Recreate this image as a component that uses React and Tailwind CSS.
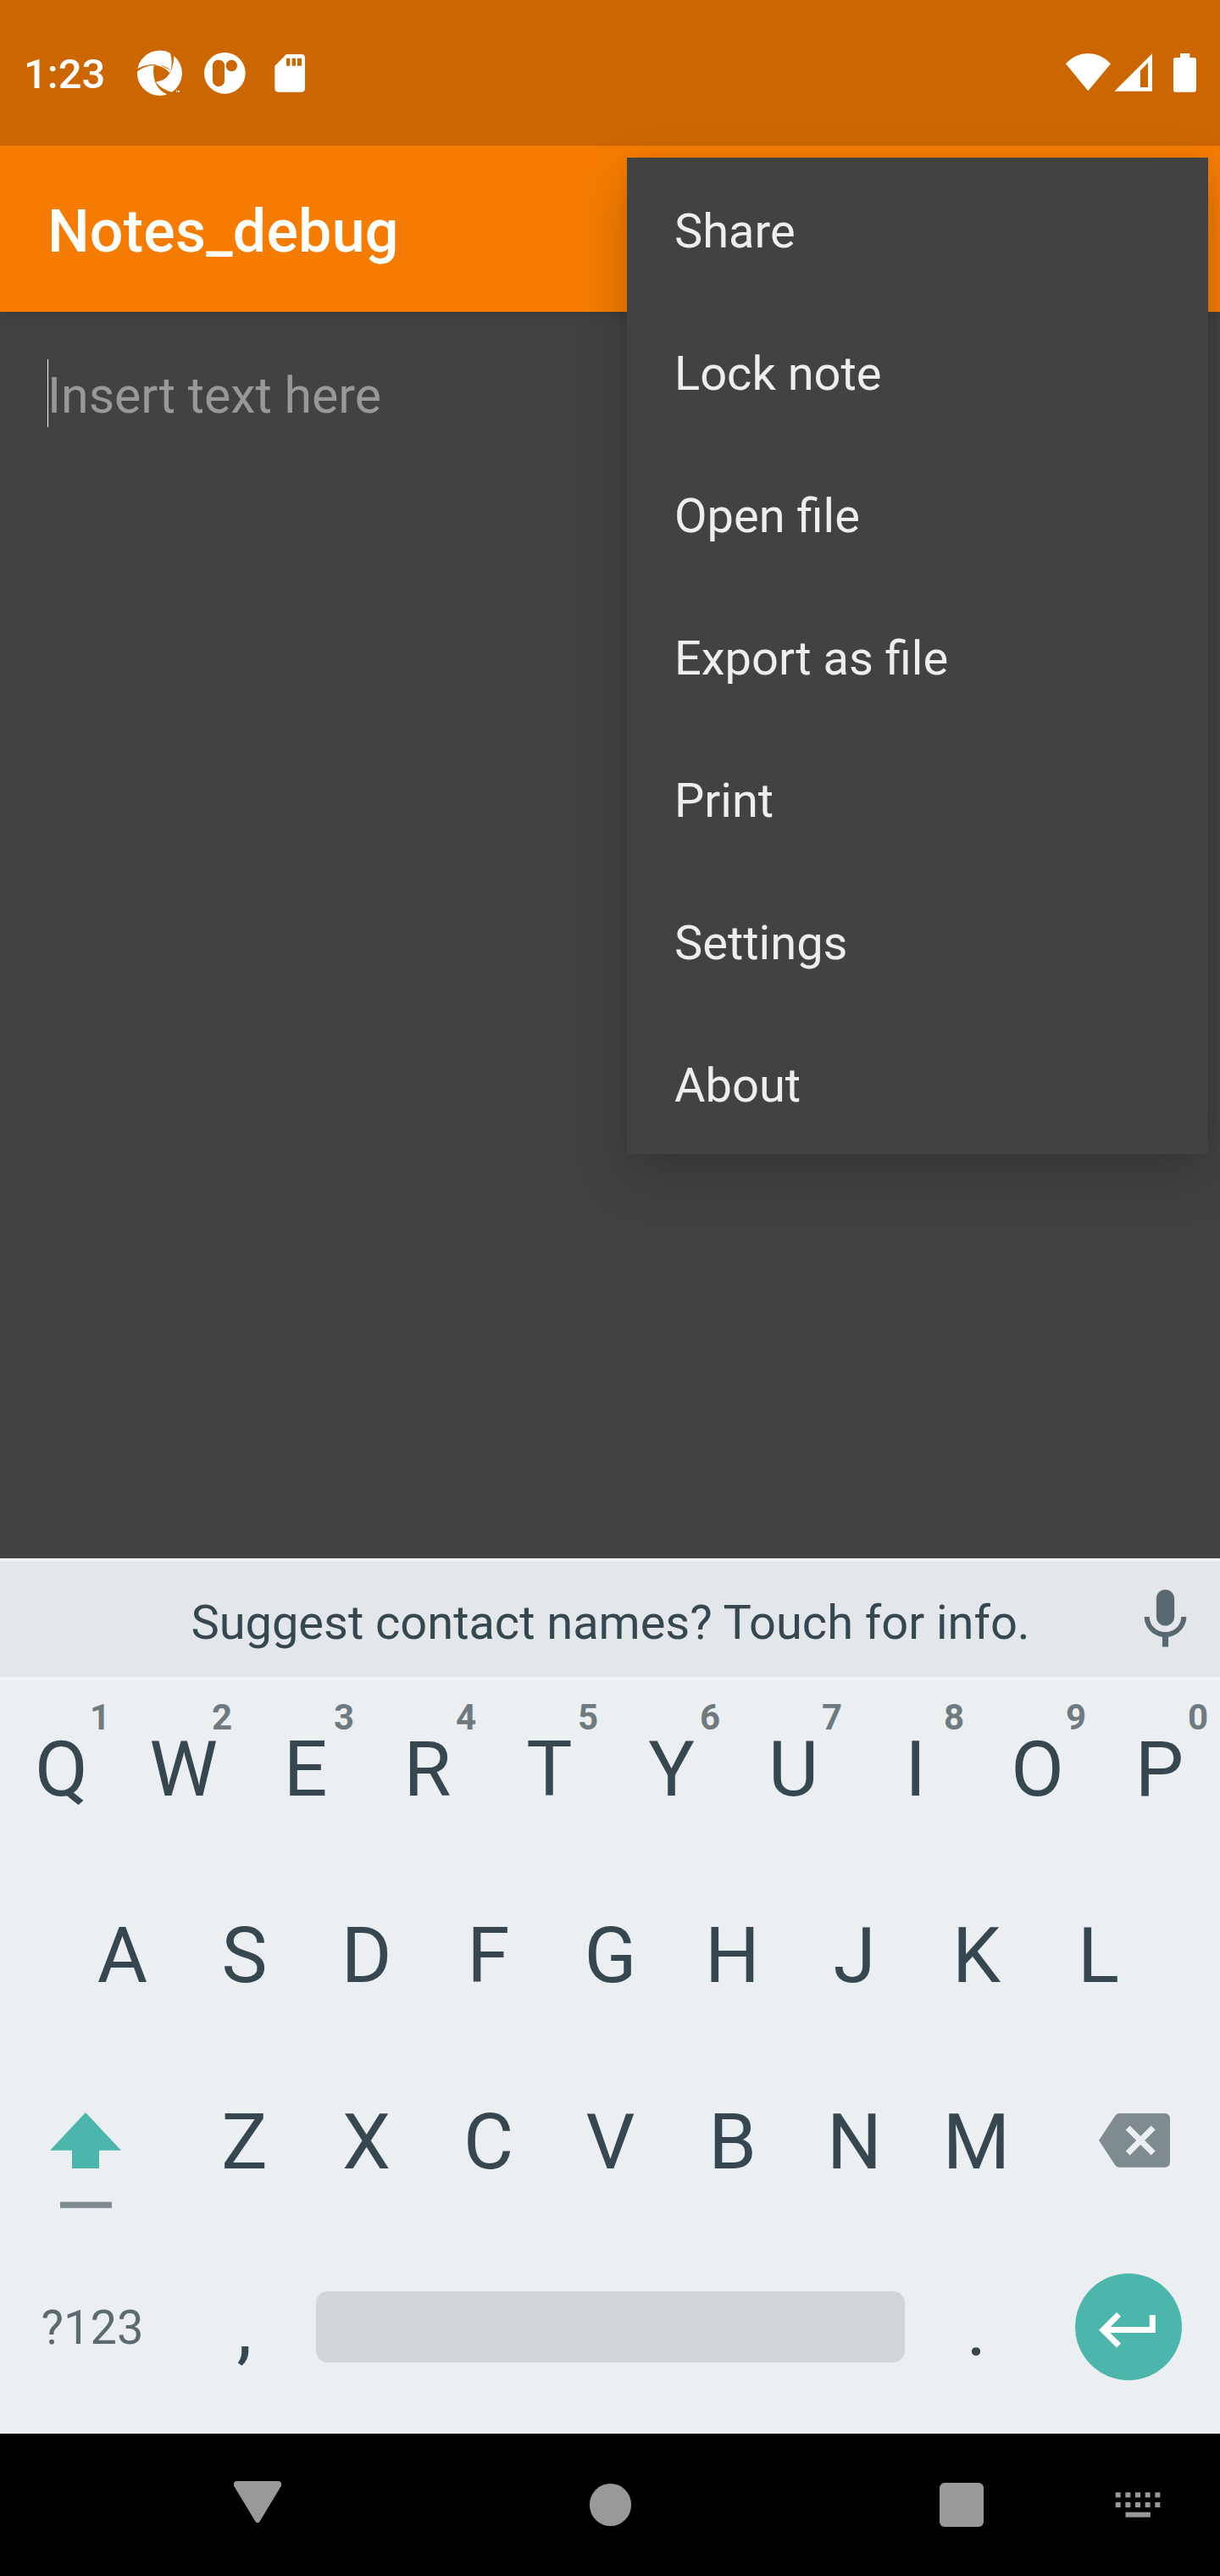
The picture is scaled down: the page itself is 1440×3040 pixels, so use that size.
import React from "react";

const MENU = ["Share", "Lock note", "Open file", "Export as file", "Print", "Settings", "About"];
const ROW_1 = ["Q", "W", "E", "R", "T", "Y", "U", "I", "O", "P"];
const HINTS = ["1", "2", "3", "4", "5", "6", "7", "8", "9", "0"];
const ROW_2 = ["A", "S", "D", "F", "G", "H", "J", "K", "L"];
const ROW_3 = ["Z", "X", "C", "V", "B", "N", "M"];

function StatusBar() {
  return (
    <header className="flex h-[172px] items-start bg-[#cc6600] text-white">
      <span className="mt-[58px] ml-[28px] w-[133px] text-[49px] leading-[60px] font-medium">1:23</span>
      <svg className="mt-[59px] h-[56px] w-[56px]" viewBox="483 177 168 168" fill="currentColor">
        <path d="M487 243A80 80 0 0 1 603 188Q612 216 605 250Q588 234 562 229Q522 225 487 243Z" />
        <path d="M615 197A80 80 0 0 1 609 326Q574 318 551 290Q585 286 600 261Q617 232 615 197Z" />
        <path d="M486 253Q510 234 545 231Q540 261 549 290Q562 321 592 334A80 80 0 0 1 486 253Z" />
        <path d="M545 231Q577 231 600 257L605 250L562 227Z" />
        <path d="M623 320H629V322H627V327H625V322H623ZM630 320H632L633 323L634 320H636V327H634V324L633 326L632 324V327H630Z" />
      </svg>
      <svg className="mt-[61px] ml-[23px] h-[51px] w-[51px]" viewBox="720 183 153 153">
        <circle cx="796" cy="259" r="73" fill="#fff" />
        <rect x="753" y="212" width="42" height="94" rx="20" fill="#cc6600" />
        <circle cx="820" cy="232.500" r="20" fill="#cc6600" />
      </svg>
      <svg className="mt-[63px] ml-[33px] h-[47px] w-[37px]" viewBox="972 189 111 141" fill="currentColor" fillRule="evenodd">
        <path d="M1014 192H1067Q1080 192 1080 205V313Q1080 326 1067 326H986Q973 326 973 313V233ZM1014 206V233H1027V206ZM1034 206V233H1047V206ZM1053 206V233H1068V206Z" />
      </svg>
      <svg className="mt-[61px] ml-auto h-[48px] w-[57px]" viewBox="171 183 171 144" fill="currentColor">
        <path d="M253 322L174 226Q208 189 253 189Q299 189 333 226Z" />
      </svg>
      <svg className="mt-[61px] h-[48px] w-[48px]" viewBox="342 183 144 144" fill="currentColor" fillRule="evenodd">
        <path d="M346 323L480 190V323ZM438 250V309H465V222Z" />
      </svg>
      <svg className="mt-[61px] mr-[27px] ml-[22px] h-[49px] w-[29px]" viewBox="552 183 87 147" fill="currentColor">
        <path d="M579 189H613V204H628Q636 204 636 212V318Q636 326 628 326H563Q555 326 555 318V212Q555 204 563 204H579Z" />
      </svg>
    </header>
  );
}

function OverflowMenu() {
  return (
    <ul className="absolute top-[186px] right-[14px] w-[686px] bg-[#424242] shadow-[0_24px_60px_rgba(0,0,0,0.2),0_0_14px_rgba(0,0,0,0.04)]">
      {MENU.map((label) => (
        <li key={label} className="flex h-[168px] items-center px-[56px] pt-[5px] text-[56px] leading-[66px] text-[#eeeeee]">
          {label}
        </li>
      ))}
    </ul>
  );
}

function Key({ label, hint }) {
  return (
    <div className="relative flex h-[220px] w-[144px] items-center justify-center pb-[10px] pl-px text-[91px] leading-none text-[#37474f]">
      {label}
      {hint && (
        <span className="absolute top-[23px] right-0 w-[52px] text-center text-[42px] leading-[42px] font-bold text-[#6e7a80]">{hint}</span>
      )}
    </div>
  );
}

function Keyboard() {
  return (
    <section className="h-[1033px] bg-[#eceff1]">
      <div className="grid h-[144px] grid-cols-[1fr_982px_1fr] border-y-4 border-t-[#f0f2f3] border-b-[#f5f8fa] bg-[#e3e7ea]">
        <span />
        <span className="flex items-center justify-center pt-[8px] pl-px text-[56px] leading-[66px] tracking-[-0.03px] whitespace-nowrap text-[#37474f]">
          Suggest contact names? Touch for info.
        </span>
        <svg className="mt-[26px] ml-[122px] h-[85px] w-[85px]" viewBox="0 0 24 24" fill="#5a686f">
          <path d="M12 14c1.660 0 3-1.340 3-3V5c0-1.660-1.340-3-3-3S9 3.340 9 5v6c0 1.660 1.340 3 3 3zm5.300-3c0 3-2.540 5.100-5.300 5.100S6.700 14 6.700 11H5c0 3.410 2.720 6.230 6 6.720V21h2v-3.280c3.280-.480 6-3.300 6-6.720z" />
        </svg>
      </div>

      <div className="flex">
        {ROW_1.map((k, i) => (
          <Key key={k} label={k} hint={HINTS[i]} />
        ))}
      </div>

      <div className="flex justify-center">
        {ROW_2.map((k) => (
          <Key key={k} label={k} />
        ))}
      </div>

      <div className="flex">
        <svg className="h-[220px] w-[216px]" viewBox="0 -51 648 660">
          <path d="M303 159L429 293H351V357H255V293H177Z" fill="#4db6ac" />
          <path d="M213 475.500H396V497.500H213Z" fill="#808b90" />
        </svg>
        {ROW_3.map((k) => (
          <Key key={k} label={k} />
        ))}
        <svg className="h-[220px] w-[216px]" viewBox="492 -51 648 660">
          <path d="M711 258L768 172Q774 162 785 162H943Q963 162 963 182V333Q963 353 943 353H785Q774 353 768 344Z" fill="#808b90" />
          <path d="M813.500 213L903.500 303M903.500 213L813.500 303" stroke="#eceff1" strokeWidth="21" />
        </svg>
      </div>

      <div className="flex h-[229px]">
        <div className="flex h-[220px] w-[216px] items-center justify-center pl-[2px] text-[56px] leading-[60px] text-[#5c696f]">
          <span className="pb-[12px]">?123</span>
        </div>
        <Key label="," />
        <div className="mt-[61px] ml-[13px] h-[84px] w-[695px] rounded-[14px] bg-[#d1d6d9]" />
        <div className="ml-[12px]">
          <Key label="." />
        </div>
        <div className="mt-[40px] ml-[45px] flex h-[126px] w-[126px] rounded-full bg-[#4db6ac]">
          <svg className="h-[126px] w-[126px]" viewBox="627 729 378 378" fill="none" stroke="#fff" strokeWidth="21">
            <path d="M781.500 873.500L726 929L781.500 984M726 928.500H901V876" />
          </svg>
        </div>
      </div>
    </section>
  );
}

function NavigationBar() {
  return (
    <nav className="flex h-[168px] items-start bg-black">
      <svg className="mt-[56px] ml-[276px] h-[50px] w-[56px]" viewBox="0 0 56 50" fill="#999">
        <path d="M3.500 0H52.500Q55.500 0 56 3V5.500L31 47Q28 51.500 25 47L0 5.500V3Q.500 0 3.500 0Z" />
      </svg>
      <div className="mt-[59px] ml-[363.500px] h-[49.500px] w-[49.500px] rounded-full bg-[#999]" />
      <div className="mt-[57.500px] ml-[363.500px] h-[52.500px] w-[52.500px] rounded-[6px] bg-[#999]" />
      <svg className="mt-[66px] ml-[154px] h-[36px] w-[57px]" viewBox="765 234 171 108" fill="#999">
        {[770, 805, 840, 875, 910].map((x) => (
          <React.Fragment key={x}>
            <rect x={x} y="244" width="18" height="18" />
            <rect x={x} y="279" width="18" height="18" />
          </React.Fragment>
        ))}
        <rect x="805.500" y="314" width="88" height="18" />
      </svg>
    </nav>
  );
}

export default function App() {
  return (
    <div className="relative h-[3040px] w-[1440px] overflow-hidden bg-[#424242] font-[Roboto,sans-serif]">
      <StatusBar />
      <div className="relative flex h-[196px] items-center bg-[#f57c00] px-[56px] pt-[6px] shadow-[0_2px_14px_rgba(0,0,0,0.12)] [clip-path:inset(0_0_-30px_0)]">
        <h1 className="text-[70px] leading-[82px] font-medium tracking-[0.2px] text-white">Notes_debug</h1>
      </div>
      <main className="h-[1471px] px-[56px] pt-[56px]">
        <div className="flex h-[80px] items-center border-l border-[#f5f5f5] pt-[5px] text-[59px] leading-[70px] text-[#989898]">
          <span className="-ml-px">Insert text here</span>
        </div>
      </main>
      <Keyboard />
      <NavigationBar />
      <OverflowMenu />
    </div>
  );
}
